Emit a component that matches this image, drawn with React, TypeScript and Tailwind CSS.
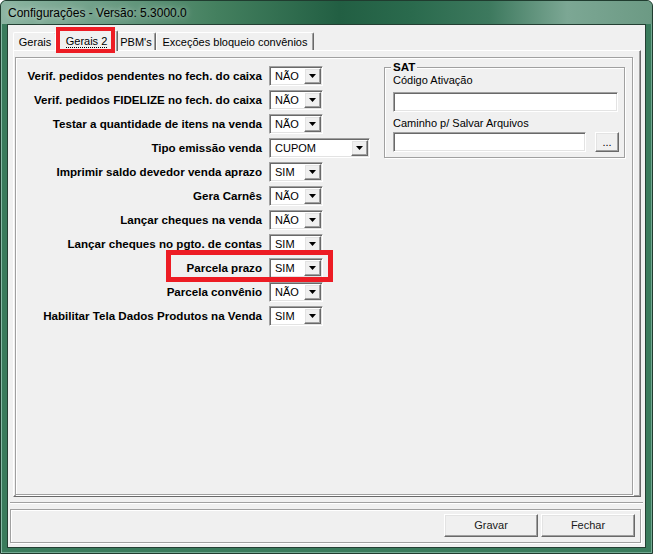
import React from 'react';

const rows: { label: string; value: string; wide?: boolean }[] = [
  { label: 'Verif. pedidos pendentes no fech. do caixa', value: 'NÃO' },
  { label: 'Verif. pedidos FIDELIZE no fech. do caixa', value: 'NÃO' },
  { label: 'Testar a quantidade de itens na venda', value: 'NÃO' },
  { label: 'Tipo emissão venda', value: 'CUPOM', wide: true },
  { label: 'Imprimir saldo devedor venda aprazo', value: 'SIM' },
  { label: 'Gera Carnês', value: 'NÃO' },
  { label: 'Lançar cheques na venda', value: 'NÃO' },
  { label: 'Lançar cheques no pgto. de contas', value: 'SIM' },
  { label: 'Parcela prazo', value: 'SIM' },
  { label: 'Parcela convênio', value: 'NÃO' },
  { label: 'Habilitar Tela Dados Produtos na Venda', value: 'SIM' },
];

// classic win32 3d borders
const sunken =
  'border border-t-[#a0a0a0] border-l-[#a0a0a0] border-r-white border-b-white shadow-[inset_1px_1px_0_#696969,inset_-1px_-1px_0_#e3e3e3]';
const raised =
  'border border-t-white border-l-white border-r-[#696969] border-b-[#696969] shadow-[inset_-1px_-1px_0_#a0a0a0,inset_1px_1px_0_#e3e3e3]';
const etched = 'border border-[#a0a0a0] shadow-[inset_1px_1px_0_#fff,1px_1px_0_#fff]';

const Combo = ({ value, wide }: { value: string; wide?: boolean }) => (
  <div
    className={`${sunken} bg-white h-[20px] ${wide ? 'w-[101px]' : 'w-[54px]'} flex items-center pl-[5px] pr-[1px]`}
  >
    <span className="flex-1 text-[11px] leading-none">{value}</span>
    <div className={`${raised} bg-[#f0f0f0] w-[17px] h-[16px] flex items-center justify-center`}>
      <svg width="7" height="4" viewBox="0 0 7 4">
        <path d="M0 0h7L3.5 4z" fill="#000" />
      </svg>
    </div>
  </div>
);

const tabs = [
  { label: 'Gerais', w: 'w-[44px]' },
  { label: 'Gerais 2', w: 'w-[63px]', active: true },
  { label: "PBM's", w: 'w-[40px]' },
  { label: 'Exceções bloqueio convênios', w: 'w-[158px]' },
];

export default function App() {
  return (
    <div className="relative w-[653px] h-[554px] bg-white font-['Liberation_Sans',Arial,sans-serif] text-[11px] text-black">
      <div className="w-[653px] h-[554px] rounded-t-[6px] border border-[#203c2f] bg-[#3a7b5c] shadow-[inset_1px_1px_0_rgba(170,215,200,0.7),inset_-1px_-1px_0_rgba(170,215,200,0.5)] overflow-hidden">
        {/* title bar */}
        <div className="h-[23px] flex items-center pl-[7px] rounded-t-[5px] bg-[linear-gradient(90deg,#8db5a2_0%,#6f9f88_15%,#44805f_33%,#225f43_52%,#2a6a4d_63%,#3d795e_75%,#7ca794_87%,#6c9a84_100%)]">
          <span className="text-[12px] leading-none text-black [text-shadow:0_0_6px_rgba(255,255,255,0.7)]">
            Configurações - Versão: 5.3000.0
          </span>
        </div>

        {/* client area */}
        <div className="mx-[6px] h-[524px] border border-[#243f33] bg-[#f0f0f0]">
          {/* tab control */}
          <div className="ml-[5px] mt-[5px] w-[628px]">
            <div className="flex items-end h-[20px]">
              {tabs.map((t) =>
                t.active ? (
                  <div
                    key={t.label}
                    className={`relative z-10 -mx-[2px] -mb-[1px] h-[21px] ${t.w} bg-[#f0f0f0] border-l border-t border-white border-r border-r-[#696969] shadow-[inset_-1px_0_0_#a0a0a0] rounded-t-[2px] flex items-center justify-center`}
                  >
                    <span className="leading-[12px] border-b border-dotted border-black">{t.label}</span>
                  </div>
                ) : (
                  <div
                    key={t.label}
                    className={`h-[18px] ${t.w} border-l border-t border-white border-r border-r-[#696969] shadow-[inset_-1px_0_0_#a0a0a0] rounded-t-[2px] flex items-center justify-center pt-[2px] whitespace-nowrap`}
                  >
                    {t.label}
                  </div>
                )
              )}
            </div>

            <div className="h-[447px] border border-t-white border-l-white border-r-[#696969] border-b-[#696969] shadow-[inset_-1px_-1px_0_#a0a0a0] pt-[6px] pl-[1px]">
              {/* inner bevel panel */}
              <div className="w-[618px] h-[438px] border border-[#a0a0a0] shadow-[inset_1px_1px_0_#fff,1px_1px_0_#fff] flex">
                <div className="w-[368px] pt-[8px] flex flex-col gap-[4px]">
                  {rows.map((r) => (
                    <div key={r.label} className="flex items-center h-[20px] gap-[7px]">
                      <div className="w-[246px] text-right font-bold text-[11.6px] leading-none whitespace-nowrap">
                        {r.label}
                      </div>
                      <Combo value={r.value} wide={r.wide} />
                    </div>
                  ))}
                </div>

                {/* SAT group */}
                <div className={`relative mt-[9px] w-[241px] h-[91px] ${etched} pl-[8px] pt-[6px]`}>
                  <span className="absolute -top-[8px] left-[6px] px-[2px] bg-[#f0f0f0] font-bold text-[11.6px] leading-[13px]">
                    SAT
                  </span>
                  <div className="leading-[13px]">Código Ativação</div>
                  <div className={`${sunken} bg-white mt-[5px] w-[225px] h-[20px]`} />
                  <div className="leading-[13px] mt-[5px]">Caminho p/ Salvar Arquivos</div>
                  <div className="flex mt-[2px] gap-[9px]">
                    <div className={`${sunken} bg-white w-[193px] h-[20px]`} />
                    <div
                      className={`${raised} bg-[#f0f0f0] w-[24px] h-[20px] flex items-center justify-center text-[11px] leading-none`}
                    >
                      ...
                    </div>
                  </div>
                </div>
              </div>
            </div>
          </div>

          {/* separator */}
          <div className="ml-[2px] mt-[5px] w-[633px] border-t border-t-[#a0a0a0] border-b border-b-white" />

          {/* bottom button panel */}
          <div className={`ml-[2px] mt-[5px] w-[631px] h-[34px] ${etched} flex justify-end items-start gap-[3px] pt-[4px] pr-[5px]`}>
            <button className={`${raised} bg-[#f0f0f0] w-[94px] h-[23px] text-[11px] text-[#1a1a1a]`}>Gravar</button>
            <button className={`${raised} bg-[#f0f0f0] w-[94px] h-[23px] text-[11px] text-[#1a1a1a]`}>Fechar</button>
          </div>
        </div>
      </div>

      {/* red highlight annotations */}
      <div className="absolute left-[56px] top-[27px] w-[59px] h-[26px] border-4 border-[#ed1c24] z-20" />
      <div className="absolute left-[166px] top-[250px] w-[167px] h-[32px] border-[5px] border-[#ed1c24] z-20" />
    </div>
  );
}
